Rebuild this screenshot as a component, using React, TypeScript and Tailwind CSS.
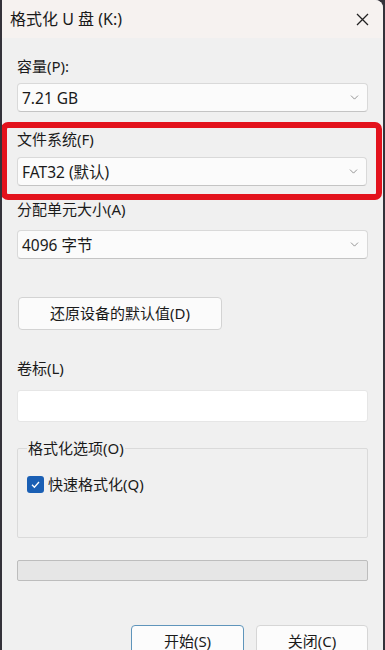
import { ChevronDown } from "lucide-react";

const FONT = "font-['Noto_Sans','Noto_Sans_CJK_SC',sans-serif]";

function Select({ value }: { value: string }) {
	return (
		<div className="flex h-[29px] items-center justify-between rounded-[4px] border border-[#d9d9d9] border-b-[#c4c4c4] bg-[#fbfbfb] pl-[4px] pr-[6px]">
			<span className="text-[15.5px] leading-[20px] text-[#1a1a1a]">{value}</span>
			<ChevronDown size={13} strokeWidth={1.3} className="text-[#6b6b6b]" />
		</div>
	);
}

function Label({ children, className = "" }: { children: string; className?: string }) {
	return <div className={`text-[15px] leading-[20px] text-[#1b1b1b] ${className}`}>{children}</div>;
}

export default function App() {
	return (
		<div className={`h-[650px] w-[385px] overflow-hidden bg-[#34323a] ${FONT}`}>
			<div className="ml-[2px] h-full w-[381px] overflow-hidden rounded-tr-[8px] bg-[#f0f0f0]">
				{/* title bar */}
				<div className="flex h-[38px] items-center justify-between bg-[#f6f2f0] pl-[8px] pr-[14px]">
					<span className="text-[16px] leading-[20px] text-[#1a1a1a]">格式化 U 盘 (K:)</span>
					<svg width="13" height="13" viewBox="0 0 13 13" className="mt-[1px]">
						<path d="M1 1L12 12M12 1L1 12" stroke="#222" strokeWidth="1.3" fill="none" />
					</svg>
				</div>

				{/* body */}
				<div className="px-[15px] pt-[18px]">
					<Label>容量(P):</Label>
					<div className="mt-[7px]">
						<Select value="7.21 GB" />
					</div>

					{/* highlighted section */}
					<div className="-ml-[16px] mt-[10px] w-[381px] rounded-[7px] border-[6px] border-[#e3121c] pb-[8px] pl-[10px] pr-[9px] pt-[1px]">
						<Label>文件系统(F)</Label>
						<div className="mt-[8px]">
							<Select value="FAT32 (默认)" />
						</div>
					</div>

					<Label className="-mt-[1px]">分配单元大小(A)</Label>
					<div className="mt-[11px]">
						<Select value="4096 字节" />
					</div>

					<button className="mt-[38px] ml-[1px] flex h-[33px] w-[204px] items-center justify-center rounded-[4px] border border-[#d3d3d3] bg-[#fbfbfb] text-[15px] text-[#1a1a1a]">
						还原设备的默认值(D)
					</button>

					<Label className="mt-[28px]">卷标(L)</Label>
					<div className="mt-[12px] h-[32px] rounded-[3px] border border-[#e6e6e6] bg-white" />

					<fieldset className="mt-[16px] h-[100px] rounded-[2px] border border-[#dadada] pl-[9px]">
						<legend className="px-[1px] text-[15px] leading-[20px] text-[#1b1b1b]">格式化选项(O)</legend>
						<div className="mt-[16px] flex items-center gap-[4px]">
							<div className="flex h-[17px] w-[17px] items-center justify-center rounded-[3px] bg-[#1a5fb4]">
								<svg width="11" height="11" viewBox="0 0 11 11">
									<path d="M2 5.8L4.4 8.2L9 3" stroke="#fff" strokeWidth="1.3" fill="none" />
								</svg>
							</div>
							<span className="text-[15px] leading-[20px] text-[#1a1a1a]">快速格式化(Q)</span>
						</div>
					</fieldset>

					<div className="mt-[22px] h-[21px] rounded-[2px] border border-[#bdbdbd] bg-[#e6e6e6]" />

					<div className="mt-[44px] flex justify-end gap-[12px]">
						<button className="flex h-[32px] w-[113px] items-center justify-center rounded-[4px] border border-[#5f95bb] bg-[#fcfcfc] text-[15px] text-[#1a1a1a]">
							开始(S)
						</button>
						<button className="flex h-[32px] w-[112px] items-center justify-center rounded-[4px] border border-[#d6d6d6] bg-[#fcfcfc] text-[15px] text-[#1a1a1a]">
							关闭(C)
						</button>
					</div>
				</div>
			</div>
		</div>
	);
}
